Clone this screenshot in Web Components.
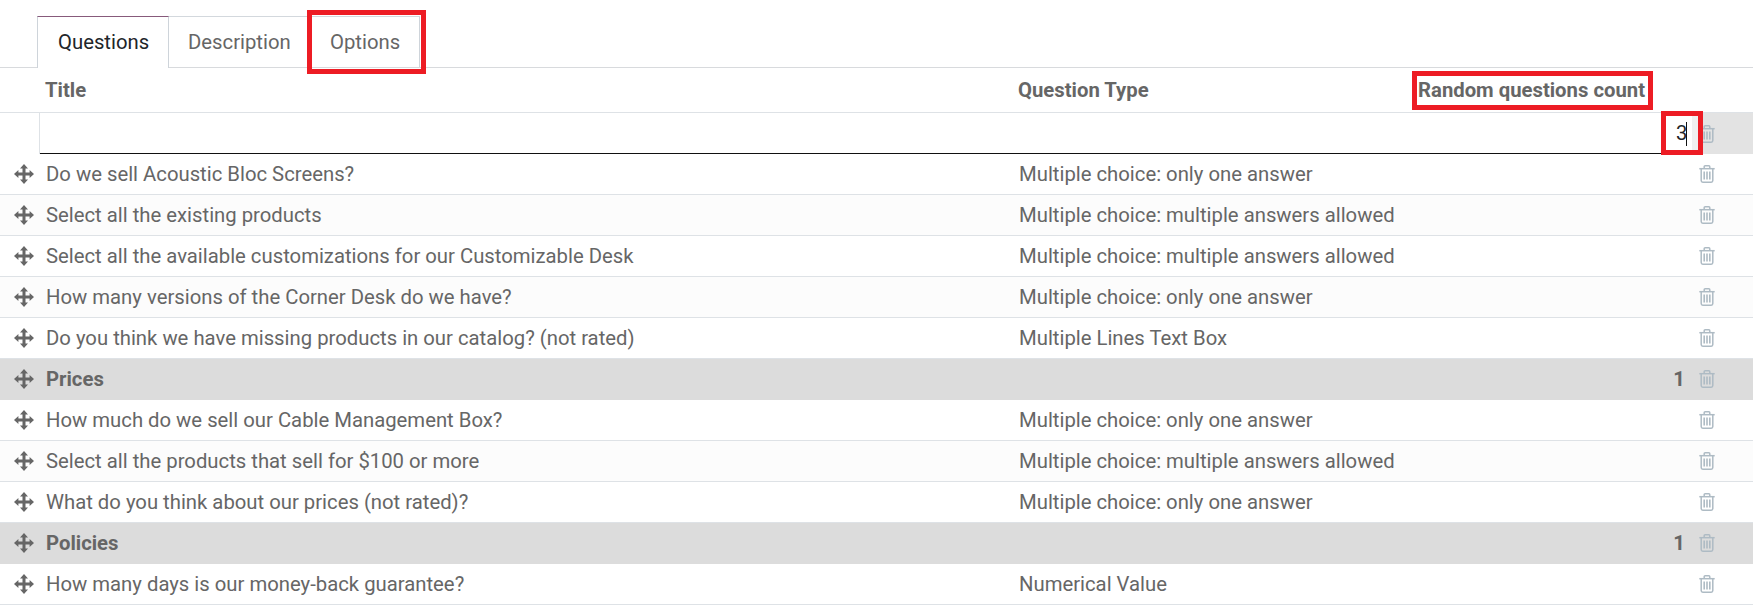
<!DOCTYPE html>
<html>
<head>
<meta charset="utf-8">
<style>
  html, body { margin: 0; background: #fff; }
  body { font-family: Roboto, "Liberation Sans", sans-serif; font-size: 20.3px; color: #666; width: 1753px; height: 614px; overflow: hidden; }
</style>
</head>
<body>
<form-tabs></form-tabs>
<question-list>
  <question-head></question-head>
  <edit-row count="3"></edit-row>
  <question-row title="Do we sell Acoustic Bloc Screens?" type="Multiple choice: only one answer"></question-row>
  <question-row odd title="Select all the existing products" type="Multiple choice: multiple answers allowed"></question-row>
  <question-row title="Select all the available customizations for our Customizable Desk" type="Multiple choice: multiple answers allowed"></question-row>
  <question-row odd title="How many versions of the Corner Desk do we have?" type="Multiple choice: only one answer"></question-row>
  <question-row title="Do you think we have missing products in our catalog? (not rated)" type="Multiple Lines Text Box"></question-row>
  <question-row section title="Prices" count="1"></question-row>
  <question-row title="How much do we sell our Cable Management Box?" type="Multiple choice: only one answer"></question-row>
  <question-row odd title="Select all the products that sell for $100 or more" type="Multiple choice: multiple answers allowed"></question-row>
  <question-row title="What do you think about our prices (not rated)?" type="Multiple choice: only one answer"></question-row>
  <question-row section title="Policies" count="1"></question-row>
  <question-row title="How many days is our money-back guarantee?" type="Numerical Value"></question-row>
</question-list>

<script>
const MOVE_ICON = `<svg width="20" height="20" viewBox="0 0 20 20" fill="#666"><path d="M10 0 14 4.4H11.5V8.5H15.6V6L20 10 15.6 14V11.5H11.5V15.6H14L10 20 6 15.6H8.5V11.5H4.4V14L0 10 4.4 6V8.5H8.5V4.4H6Z"/></svg>`
const TRASH_ICON = `<svg width="16" height="18" viewBox="0 0 16 18" fill="none" stroke="#aebbc4" stroke-width="1.5"><path d="M0.3 3.7H15.7"/><path d="M5.2 3.4V1.7Q5.2 0.8 6.1 0.8H9.9Q10.8 0.8 10.8 1.7V3.4"/><path d="M2.2 3.7V15.6Q2.2 17.2 3.8 17.2H12.2Q13.8 17.2 13.8 15.6V3.7"/><path d="M5.2 6.4V14.6M8 6.4V14.6M10.8 6.4V14.6" stroke-width="1.6"/></svg>`

class FormTabs extends HTMLElement {
  constructor () {
    super()
    this.attachShadow({mode: 'open'}).innerHTML = `
      <style>
        :host { display: flex; height: 68px; box-sizing: border-box; padding: 16px 0 0 37px; border-bottom: 1px solid #d8dadd; }
        .tab { box-sizing: border-box; height: 51px; line-height: 50px; color: #666; border-top: 1px solid #d3d8dd; border-right: 1px solid #ced4da; }
        .tab.active { width: 132px; height: 52px; padding-left: 20px; color: #212529; background: #fff; border-left: 1px solid #ced4da; border-top-color: #875a7b; }
        .tab.desc { width: 143px; padding-left: 19px; }
        .tab.outlined { position: relative; width: 108px; padding-left: 18px; }
        .mark { position: absolute; left: -5px; top: -7px; width: 119px; height: 64px; box-sizing: border-box; border: 5px solid #ed1c24; }
      </style>
      <div class="tab active">Questions</div>
      <div class="tab desc">Description</div>
      <div class="tab outlined">Options<div class="mark"></div></div>`
  }
}

class QuestionHead extends HTMLElement {
  constructor () {
    super()
    this.attachShadow({mode: 'open'}).innerHTML = `
      <style>
        :host { display: grid; grid-template-columns: 973px 1fr auto 108px; height: 45px; box-sizing: border-box; border-bottom: 1px solid #dee2e6; align-items: center; font-weight: 700; color: #666; padding-left: 45px; }
        .count { position: relative; line-height: 24px; }
        .mark { position: absolute; left: -6px; right: -8px; top: -7px; bottom: -8px; border: 5px solid #ed1c24; }
      </style>
      <div>Title</div>
      <div>Question Type</div>
      <div class="count">Random questions count<div class="mark"></div></div>
      <div></div>`
  }
}

class EditRow extends HTMLElement {
  constructor () {
    super()
    this.attachShadow({mode: 'open'}).innerHTML = `
      <style>
        :host { display: flex; height: 41px; box-sizing: border-box; }
        .gap { width: 40px; border-right: 1px solid #dee2e6; box-sizing: border-box; }
        .line { flex: 1; border-bottom: 1px solid #111; }
        .count { position: relative; width: 32px; box-sizing: border-box; padding-left: 10px; color: #212529; line-height: 40px; background: linear-gradient(to right, #fff 26px, #f0f0f0 26px); }
        .count i { position: absolute; left: 20px; top: 9px; width: 1px; height: 24px; background: #111; }
        .mark { position: absolute; left: -5px; top: -2px; right: -5px; bottom: -1px; border: 5px solid #ed1c24; }
        .rest { width: 55px; background: #e3e3e3; padding-left: 1px; box-sizing: border-box; display: flex; align-items: center; }
      </style>
      <div class="gap"></div>
      <div class="line"></div>
      <div class="count"><span>${this.getAttribute('count')}</span><i></i><div class="mark"></div></div>
      <div class="rest">${TRASH_ICON}</div>`
  }
}

class QuestionRow extends HTMLElement {
  constructor () {
    super()
    this.attachShadow({mode: 'open'}).innerHTML = `
      <style>
        :host { display: grid; grid-template-columns: 46px 973px 1fr 26px 68px; height: 41px; box-sizing: border-box; align-items: center; border-bottom: 1px solid #dee2e6; color: #666; }
        :host([odd]) { background: #fcfcfc; }
        :host([section]) { background: #dcdcdc; font-weight: 700; border-bottom: 1px solid #dcdcdc; }
        .grip { display: flex; padding-left: 14px; }
        .num { text-align: right; }
        .del { display: flex; padding-left: 14px; }
      </style>
      <div class="grip">${MOVE_ICON}</div>
      <div>${this.getAttribute('title')}</div>
      <div>${this.getAttribute('type') || ''}</div>
      <div class="num">${this.getAttribute('count') || ''}</div>
      <div class="del">${TRASH_ICON}</div>`
    this.removeAttribute('title')
  }
}

class QuestionList extends HTMLElement {
  constructor () {
    super()
    this.attachShadow({mode: 'open'}).innerHTML = `
      <style>:host { display: block; }</style>
      <slot></slot>`
  }
}

window.customElements.define('form-tabs', FormTabs)
window.customElements.define('question-head', QuestionHead)
window.customElements.define('edit-row', EditRow)
window.customElements.define('question-row', QuestionRow)
window.customElements.define('question-list', QuestionList)
</script>
</body>
</html>
